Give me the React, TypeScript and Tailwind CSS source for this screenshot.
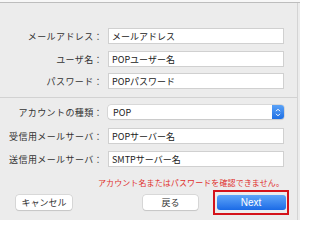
import React from "react";

const font = { fontFamily: '"Noto Sans CJK JP", "Noto Sans", sans-serif' };

function Row({ label, value, top }: { label: string; value: string; top: string }) {
  return (
    <div className={`flex items-center ${top}`}>
      <div className="w-[104px] shrink-0 text-right text-[9px] leading-none tracking-[0.4px] text-[#333] pr-[1px]">
        {label}
      </div>
      <div className="ml-[4px] w-[176px] h-[16px] bg-white border border-[#d0d0d0] flex items-center pl-[3px] text-[9px] leading-none text-[#222]">
        {value}
      </div>
    </div>
  );
}

export default function App() {
  return (
    <div style={font} className="w-[300px] h-[220px] bg-[#ececec] overflow-hidden relative">
      <div className="h-[2px] bg-[#f7f7f7]" />
      <div className="h-[1px] bg-[#bdbdbd]" />
      <div className="flex flex-col border-r border-[#d4d4d4] h-[217px] w-[298px]">
        <Row label="メールアドレス：" value="メールアドレス" top="mt-[25px]" />
        <Row label="ユーザ名：" value="POPユーザー名" top="mt-[7px]" />
        <Row label="パスワード：" value="POPパスワード" top="mt-[6px]" />
        <div className="mt-[8px] h-[1px] bg-[#d2d2d2] w-full" />
        <div className="flex items-center mt-[7px]">
          <div className="w-[104px] shrink-0 text-right text-[9px] leading-none tracking-[0.4px] text-[#333] pr-[1px]">
            アカウントの種類：
          </div>
          <div className="ml-[4px] w-[176px] h-[14px] bg-white rounded-[3px] shadow-[0_0_0_0.5px_#c4c4c4,0_1px_1px_rgba(0,0,0,0.12)] flex items-center justify-between pl-[5px] text-[9px] leading-none text-[#222]">
            <span>POP</span>
            <div className="w-[12px] h-[14px] rounded-r-[3px] bg-gradient-to-b from-[#5aa2f7] to-[#1d6fe4] flex flex-col items-center justify-center">
              <svg width="6" height="9" viewBox="0 0 6 9">
                <path d="M1 3.2 L3 1.2 L5 3.2" stroke="white" strokeWidth="1" fill="none" />
                <path d="M1 5.8 L3 7.8 L5 5.8" stroke="white" strokeWidth="1" fill="none" />
              </svg>
            </div>
          </div>
        </div>
        <Row label="受信用メールサーバ：" value="POPサーバー名" top="mt-[9px]" />
        <Row label="送信用メールサーバ：" value="SMTPサーバー名" top="mt-[7px]" />
        <div className="mt-[12px] pr-[13px] text-right text-[8px] leading-none text-[#e0302c] tracking-[0.1px]">
          アカウント名またはパスワードを確認できません。
        </div>
        <div className="flex items-center mt-[3px]">
          <div className="ml-[16px] w-[56px] h-[15px] bg-white rounded-[3px] shadow-[0_0_0_0.5px_#c4c4c4,0_1px_1px_rgba(0,0,0,0.15)] flex items-center justify-center text-[9px] leading-none text-[#333]">
            キャンセル
          </div>
          <div className="ml-[71px] w-[55px] h-[15px] bg-white rounded-[3px] shadow-[0_0_0_0.5px_#c4c4c4,0_1px_1px_rgba(0,0,0,0.15)] flex items-center justify-center text-[9px] leading-none text-[#333]">
            戻る
          </div>
          <div className="ml-[15px] w-[76px] h-[25px] border-2 border-[#d4121a] flex items-center justify-center">
            <div className="w-[69px] h-[15px] rounded-[3px] bg-gradient-to-b from-[#5ea5f8] to-[#1a6ae6] flex items-center justify-center text-[10px] leading-none text-white" style={{ fontFamily: '"Liberation Sans", sans-serif' }}>
              Next
            </div>
          </div>
        </div>
      </div>
    </div>
  );
}
